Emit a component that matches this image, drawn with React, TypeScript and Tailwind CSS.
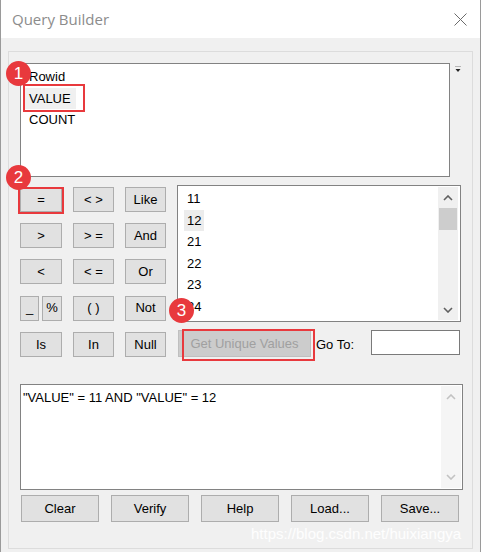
import React from "react";

const font = { fontFamily: '"Liberation Sans", Arial, sans-serif' };

function Btn({ label, className = "" }: { label: string; className?: string }) {
  return (
    <div
      className={`h-[25px] bg-[#e1e1e1] border border-[#adadad] flex items-center justify-center text-[13px] text-black ${className}`}
    >
      {label}
    </div>
  );
}

function Badge({ n, className }: { n: number; className: string }) {
  return (
    <div
      className={`absolute w-[25px] h-[25px] rounded-full bg-[#e8393d] text-white text-[17px] flex items-center justify-center ${className}`}
    >
      {n}
    </div>
  );
}

function Chevron({ up, color }: { up?: boolean; color: string }) {
  return (
    <svg width="10" height="6" viewBox="0 0 10 6">
      <path
        d={up ? "M1 5 L5 1 L9 5" : "M1 1 L5 5 L9 1"}
        fill="none"
        stroke={color}
        strokeWidth="1.6"
      />
    </svg>
  );
}

export default function App() {
  const fields = ["Rowid", "VALUE", "COUNT"];
  const values = ["11", "12", "21", "22", "23", "24"];
  const ops = [
    ["=", "< >", "Like"],
    [">", "> =", "And"],
    ["<", "< =", "Or"],
    ["", "( )", "Not"],
    ["Is", "In", "Null"],
  ];

  return (
    <div className="relative w-[481px] h-[552px] bg-white border-x border-[#9a9a9a] flex flex-col overflow-hidden" style={font}>
      {/* Title bar */}
      <div className="h-[38px] shrink-0 flex items-center justify-between pl-[11px] pr-[13px]">
        <span className="text-[15px] text-[#8c8c8c]" style={{ fontFamily: '"Open Sans", "Noto Sans", sans-serif' }}>
          Query Builder
        </span>
        <svg width="13" height="13" viewBox="0 0 13 13" className="mt-[1px]">
          <path d="M0.5 0.5 L12.5 12.5 M12.5 0.5 L0.5 12.5" stroke="#6b6b6b" strokeWidth="1" />
        </svg>
      </div>

      {/* Body */}
      <div className="flex-1 bg-[#f0f0f0] pt-[13px] px-[7px]">
        <div className="h-[498px] border border-[#dcdcdc] pl-[11px] pt-[11px]">
          {/* Field list */}
          <div className="flex">
            <div className="w-[430px] h-[114px] bg-white border border-[#828282] pl-[3px] pt-[2px] text-[13px] text-black leading-[21.5px]">
              {fields.map((f) => (
                <div key={f}>
                  <span className={`inline-block px-[5px] ${f === "VALUE" ? "bg-[#f0f0f0]" : ""}`}>{f}</span>
                </div>
              ))}
            </div>
            <svg width="6" height="7" viewBox="0 0 6 7" className="ml-[5px] mt-[3px]">
              <path d="M0 0.5 H6" stroke="#b5b5b5" strokeWidth="1" />
              <path d="M0.5 3 H5.5 L3 6 Z" fill="#222" />
            </svg>
          </div>

          {/* Operators + values */}
          <div className="flex mt-[8px] gap-[11px]">
            <div className="w-[146px] mt-[2px] grid grid-cols-[42px_41px_41px] gap-x-[11px] gap-y-[11px]">
              {ops.map((row, ri) =>
                row.map((op, ci) =>
                  ri === 3 && ci === 0 ? (
                    <div key={`${ri}-${ci}`} className="flex gap-[3px]">
                      <Btn label="_" className="w-[19px]" />
                      <Btn label="%" className="w-[20px]" />
                    </div>
                  ) : (
                    <Btn key={`${ri}-${ci}`} label={op} />
                  )
                )
              )}
            </div>

            <div className="w-[284px] flex flex-col">
              <div className="h-[137px] bg-white border border-[#828282] flex">
                <div className="flex-1 pl-[6px] pt-[2px] text-[13px] text-black leading-[21.5px] overflow-hidden">
                  {values.map((v) => (
                    <div key={v}>
                      <span className={`inline-block px-[3px] ${v === "12" ? "bg-[#ececec]" : ""}`}>{v}</span>
                    </div>
                  ))}
                </div>
                <div className="w-[20px] mr-[2px] my-[1px] bg-[#f0f0f0] flex flex-col items-center">
                  <div className="h-[21px] flex items-center justify-center">
                    <Chevron up color="#606060" />
                  </div>
                  <div className="w-[18px] h-[22px] bg-[#cdcdcd]" />
                  <div className="flex-1" />
                  <div className="h-[21px] flex items-center justify-center">
                    <Chevron color="#606060" />
                  </div>
                </div>
              </div>

              <div className="flex items-start mt-[8px]">
                <div className="ml-[1px] w-[133px] h-[27px] bg-[#cccccc] border border-[#bfbfbf] flex items-center justify-center text-[13px] text-[#a0a0a0]">
                  Get Unique Values
                </div>
                <span className="ml-[5px] mt-[5px] text-[13px] text-black">Go To:</span>
                <div className="ml-auto mr-[1px] w-[89px] h-[25px] bg-white border border-[#7a7a7a]" />
              </div>
            </div>
          </div>

          {/* Expression */}
          <div className="mt-[27px] w-[443px] h-[106px] bg-white border border-[#828282] flex">
            <div className="flex-1 pl-[2px] pt-[3px] text-[13px] text-black">
              "VALUE" = 11 AND "VALUE" = 12
            </div>
            <div className="w-[20px] mr-[1px] my-[1px] bg-[#f5f5f5] flex flex-col items-center justify-between py-[8px]">
              <Chevron up color="#c2c2c2" />
              <Chevron color="#c2c2c2" />
            </div>
          </div>

          {/* Bottom buttons */}
          <div className="flex gap-[12px] mt-[5px] ml-[1px]">
            {["Clear", "Verify", "Help", "Load...", "Save..."].map((b) => (
              <Btn key={b} label={b} className="w-[78px] h-[27px]" />
            ))}
          </div>
        </div>
      </div>

      {/* Annotations */}
      <div className="absolute left-[22px] top-[84px] w-[62px] h-[28px] border-2 border-[#e8393d]" />
      <div className="absolute left-[17px] top-[187px] w-[46px] h-[27px] border-2 border-[#e8393d]" />
      <div className="absolute left-[181px] top-[329px] w-[133px] h-[32px] border-2 border-[#e8393d]" />
      <Badge n={1} className="left-[5px] top-[61px]" />
      <Badge n={2} className="left-[5px] top-[165px]" />
      <Badge n={3} className="left-[168px] top-[298px]" />

      {/* Watermark */}
      <div className="absolute left-[250px] top-[523px] text-[15px] text-white/90">
        https://blog.csdn.net/huixiangya
      </div>
    </div>
  );
}
